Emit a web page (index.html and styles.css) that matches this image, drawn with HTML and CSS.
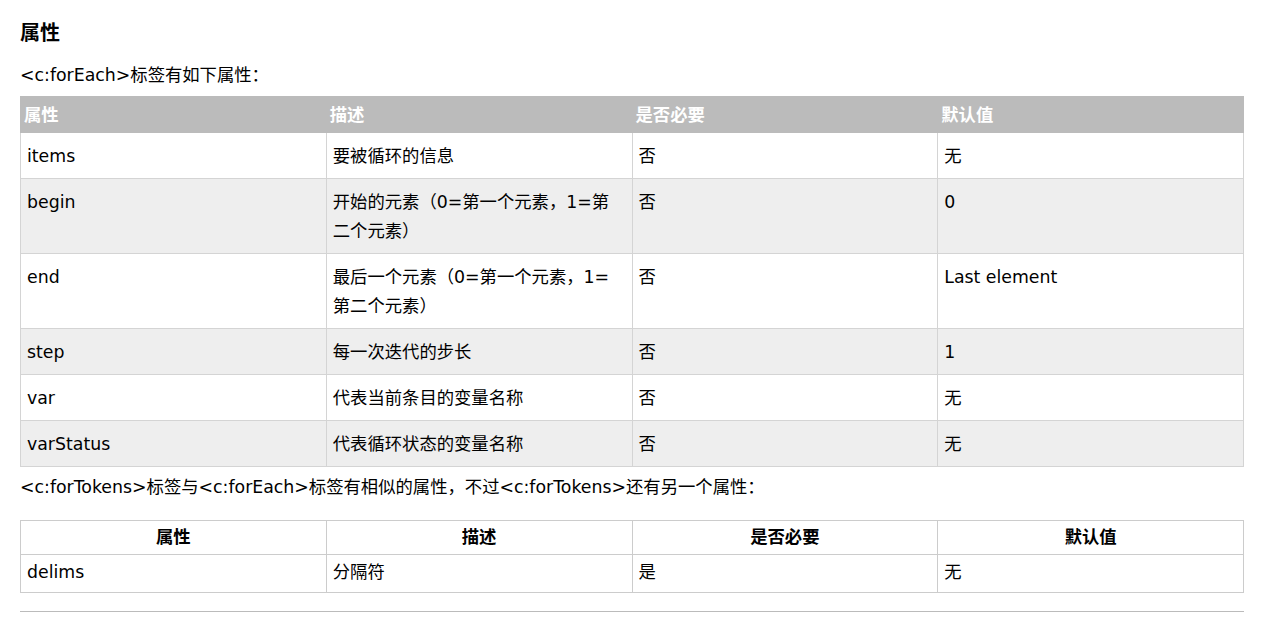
FILE: index.html
```html
<!DOCTYPE html>
<html lang="zh-CN">
<head>
<meta charset="utf-8">
<title>属性</title>
<link rel="stylesheet" href="styles.css">
</head>
<body>
<div class="page">
  <h2 class="title">属性</h2>
  <p class="intro">&lt;c:forEach&gt;标签有如下属性：</p>
  <table class="reference">
    <colgroup><col><col><col><col></colgroup>
    <thead>
      <tr><th>属性</th><th>描述</th><th>是否必要</th><th>默认值</th></tr>
    </thead>
    <tbody>
      <tr><td>items</td><td>要被循环的信息</td><td>否</td><td>无</td></tr>
      <tr class="alt"><td>begin</td><td>开始的元素（0=第一个元素，1=第二个元素）</td><td>否</td><td>0</td></tr>
      <tr><td>end</td><td>最后一个元素（0=第一个元素，1=第二个元素）</td><td>否</td><td>Last element</td></tr>
      <tr class="alt"><td>step</td><td>每一次迭代的步长</td><td>否</td><td>1</td></tr>
      <tr><td>var</td><td>代表当前条目的变量名称</td><td>否</td><td>无</td></tr>
      <tr class="alt"><td>varStatus</td><td>代表循环状态的变量名称</td><td>否</td><td>无</td></tr>
    </tbody>
  </table>
  <p class="note">&lt;c:forTokens&gt;标签与&lt;c:forEach&gt;标签有相似的属性，不过&lt;c:forTokens&gt;还有另一个属性：</p>
  <table class="plain">
    <colgroup><col><col><col><col></colgroup>
    <thead>
      <tr><th>属性</th><th>描述</th><th>是否必要</th><th>默认值</th></tr>
    </thead>
    <tbody>
      <tr><td>delims</td><td>分隔符</td><td>是</td><td>无</td></tr>
    </tbody>
  </table>
  <hr class="rule">
</div>
</body>
</html>
```

FILE: styles.css
```css
html, body {
  margin: 0;
  padding: 0;
  background: #fff;
}
body {
  font-family: "DejaVu Sans", "Noto Sans CJK SC", sans-serif;
  font-size: 17.33px;
  color: #000;
}
.page {
  padding: 20px 20px 0 20px;
  width: 1224px;
}
.title {
  margin: 0;
  font-size: 20px;
  line-height: 26px;
  font-weight: bold;
}
.intro {
  margin: 15px 0 6px 0;
  line-height: 29px;
}
.note {
  margin: 6px 0 18px 0;
  line-height: 29px;
}
table {
  width: 1224px;
  table-layout: fixed;
  border-collapse: collapse;
  border-spacing: 0;
}
col { width: 25%; }

.reference th {
  background: #bbbbbb;
  color: #fff;
  border: 1px solid #bbbbbb;
  font-weight: bold;
  text-align: left;
  padding: 4px 3px 2px 3px;
  line-height: 29px;
  vertical-align: top;
}
.reference td {
  border: 1px solid #d4d4d4;
  padding: 9px 6px 7px 6px;
  line-height: 29px;
  vertical-align: top;
  background: #fff;
}
.reference tr.alt td {
  background: #eeeeee;
}

.plain th {
  border: 1px solid #cccccc;
  font-weight: bold;
  text-align: center;
  padding: 2px 6px;
  line-height: 29px;
}
.plain td {
  border: 1px solid #cccccc;
  padding: 3px 6px 5px 6px;
  line-height: 29px;
  vertical-align: top;
}

.rule {
  margin: 18px 0 0 0;
  border: 0;
  height: 1px;
  background: #bbbbbb;
}
```
